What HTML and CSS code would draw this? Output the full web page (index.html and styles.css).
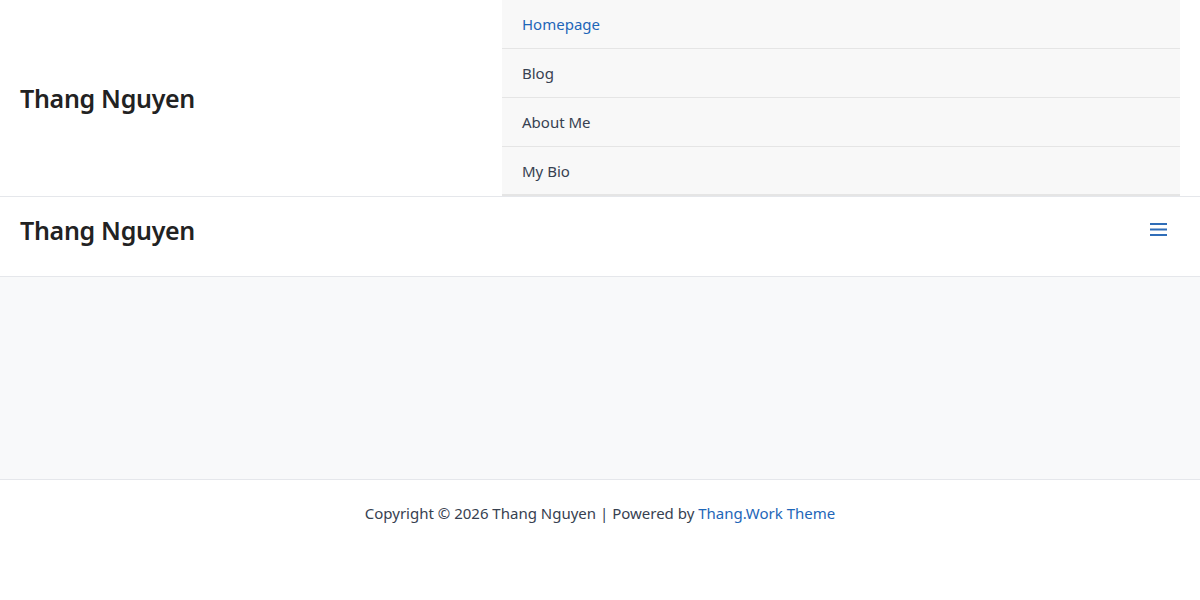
FILE: index.html
```html
<!DOCTYPE html>
<html lang="en">
<head>
<meta charset="utf-8">
<title>Thang Nguyen</title>
<link rel="stylesheet" href="styles.css">
</head>
<body>
<header class="top-header">
  <div class="brand-wrap"><span class="brand">Thang Nguyen</span></div>
  <nav class="menu">
    <a class="menu-item active" href="#">Homepage</a>
    <a class="menu-item" href="#">Blog</a>
    <a class="menu-item" href="#">About Me</a>
    <a class="menu-item" href="#">My Bio</a>
  </nav>
</header>
<header class="bar-header">
  <span class="brand">Thang Nguyen</span>
  <button class="burger" aria-label="Menu">
    <svg width="17" height="13" viewBox="0 0 17 13"><rect x="0" y="0" width="17" height="2" fill="currentColor"/><rect x="0" y="5.5" width="17" height="2" fill="currentColor"/><rect x="0" y="11" width="17" height="2" fill="currentColor"/></svg>
  </button>
</header>
<main class="content"></main>
<footer class="footer">
  <p>Copyright © 2026 Thang Nguyen | Powered by <a href="#">Thang.Work Theme</a></p>
</footer>
</body>
</html>
```
FILE: styles.css
```css
* { box-sizing: border-box; }
html, body { margin: 0; padding: 0; }
body {
  font-family: "Noto Sans", "Open Sans", sans-serif;
  color: #374151;
  background: #fff;
}
a { text-decoration: none; }
.brand {
  font-size: 25px;
  font-weight: 600;
  color: #222;
  letter-spacing: -0.3px;
}
.top-header {
  display: flex;
  align-items: center;
  padding: 0 20px;
  height: 197px;
  border-bottom: 1px solid #e5e7eb;
}
.brand-wrap { width: 482px; }
.menu {
  flex: 1;
  align-self: stretch;
  display: flex;
  flex-direction: column;
  background: #f8f8f8;
}
.menu-item {
  display: flex;
  align-items: center;
  height: 49px;
  padding: 0 20px;
  font-size: 15px;
  color: #374151;
  border-bottom: 1px solid #e5e5e5;
}
.menu-item:last-child { border-bottom: 2px solid #e5e5e5; }
.menu-item.active { color: #1e66b8; }
.bar-header {
  display: flex;
  align-items: center;
  justify-content: space-between;
  height: 80px;
  padding: 0 33px 14px 20px;
  border-bottom: 1px solid #e5e7eb;
}
.burger {
  border: 0;
  background: none;
  padding: 0;
  color: #2f6db8;
  display: flex;
  margin-top: -1px;
}
.content {
  height: 203px;
  background: #f8f9fa;
  border-bottom: 1px solid #e5e7eb;
}
.footer {
  text-align: center;
  font-size: 15px;
  color: #374151;
  padding-top: 23px;
}
.footer p { margin: 0; }
.footer a { color: #1e66b8; }
```
